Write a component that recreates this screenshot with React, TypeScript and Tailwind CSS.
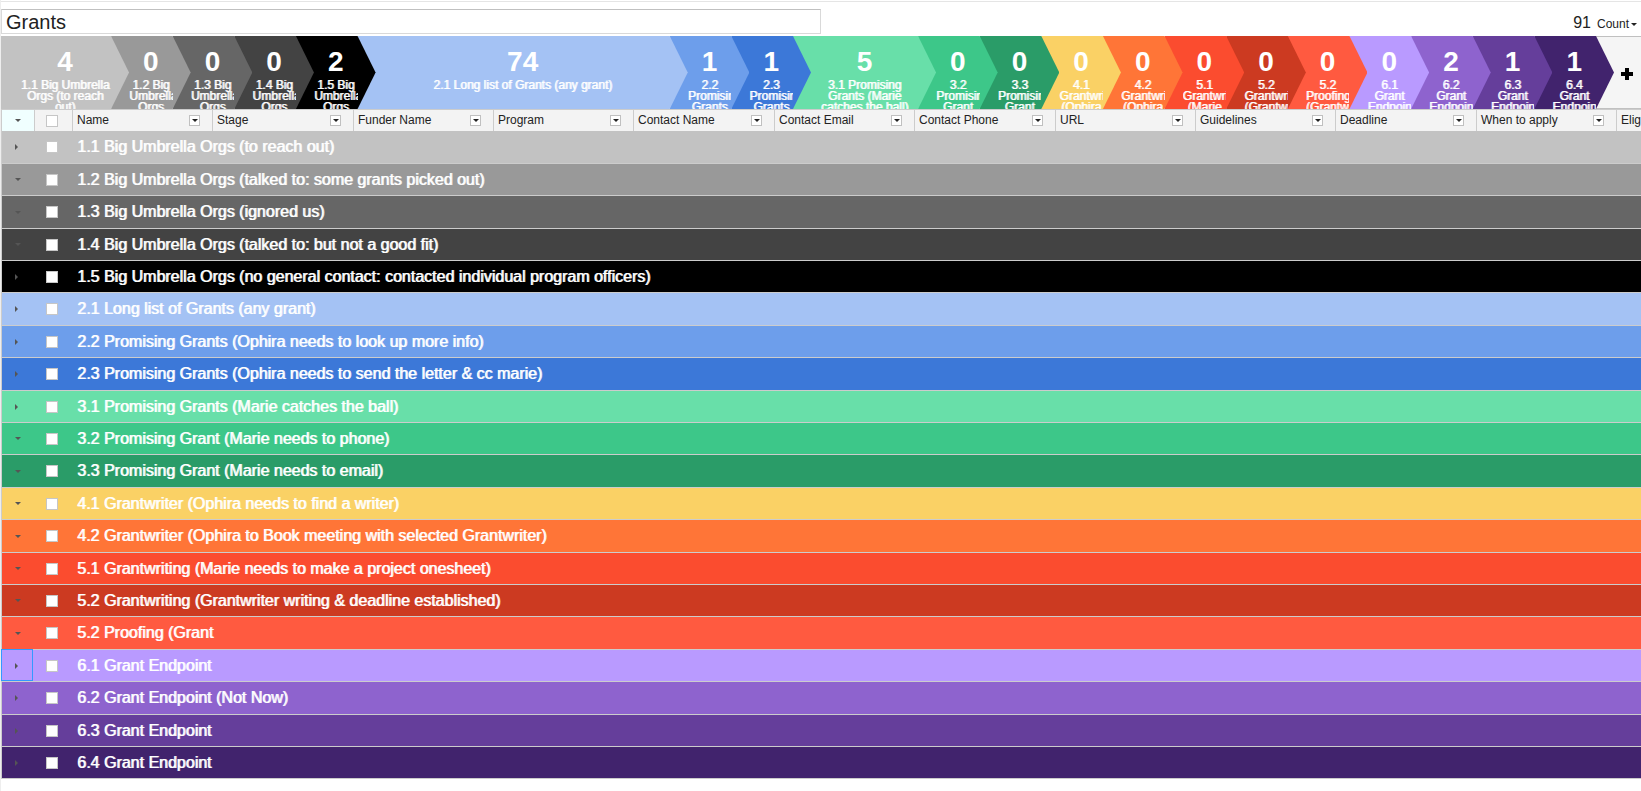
import React from "react";
import { clsx } from "clsx";

type Stage = {
  count: number;
  short: string;
  name: string;
  bg: string;
  open: boolean;
  selected?: boolean;
};

const stages: Stage[] = [
  { count: 4, short: "1.1 Big Umbrella Orgs (to reach out)", name: "1.1 Big Umbrella Orgs (to reach out)", bg: "bg-[#c2c2c2]", open: false },
  { count: 0, short: "1.2 Big Umbrella Orgs", name: "1.2 Big Umbrella Orgs (talked to: some grants picked out)", bg: "bg-[#999999]", open: true },
  { count: 0, short: "1.3 Big Umbrella Orgs", name: "1.3 Big Umbrella Orgs (ignored us)", bg: "bg-[#666666]", open: true },
  { count: 0, short: "1.4 Big Umbrella Orgs", name: "1.4 Big Umbrella Orgs (talked to: but not a good fit)", bg: "bg-[#434343]", open: true },
  { count: 2, short: "1.5 Big Umbrella Orgs", name: "1.5 Big Umbrella Orgs (no general contact: contacted individual program officers)", bg: "bg-black", open: false },
  { count: 74, short: "2.1 Long list of Grants (any grant)", name: "2.1 Long list of Grants (any grant)", bg: "bg-[#a4c2f4]", open: false },
  { count: 1, short: "2.2 Promising Grants", name: "2.2 Promising Grants (Ophira needs to look up more info)", bg: "bg-[#6d9eeb]", open: false },
  { count: 1, short: "2.3 Promising Grants", name: "2.3 Promising Grants (Ophira needs to send the letter & cc marie)", bg: "bg-[#3c78d8]", open: false },
  { count: 5, short: "3.1 Promising Grants (Marie catches the ball)", name: "3.1 Promising Grants (Marie catches the ball)", bg: "bg-[#68dfa9]", open: false },
  { count: 0, short: "3.2 Promising Grant", name: "3.2 Promising Grant (Marie needs to phone)", bg: "bg-[#3dc789]", open: true },
  { count: 0, short: "3.3 Promising Grant", name: "3.3 Promising Grant (Marie needs to email)", bg: "bg-[#2a9c68]", open: true },
  { count: 0, short: "4.1 Grantwriter (Ophira", name: "4.1 Grantwriter (Ophira needs to find a writer)", bg: "bg-[#fad165]", open: true },
  { count: 0, short: "4.2 Grantwriter (Ophira", name: "4.2 Grantwriter (Ophira to Book meeting with selected Grantwriter)", bg: "bg-[#ff7537]", open: true },
  { count: 0, short: "5.1 Grantwriting (Marie", name: "5.1 Grantwriting (Marie needs to make a project onesheet)", bg: "bg-[#fb4c2f]", open: true },
  { count: 0, short: "5.2 Grantwriting (Grantwriter", name: "5.2 Grantwriting (Grantwriter writing & deadline established)", bg: "bg-[#cc3a21]", open: true },
  { count: 0, short: "5.2 Proofing (Grantwriter", name: "5.2 Proofing (Grant", bg: "bg-[#ff5a40]", open: true },
  { count: 0, short: "6.1 Grant Endpoint", name: "6.1 Grant Endpoint", bg: "bg-[#b99aff]", open: false, selected: true },
  { count: 2, short: "6.2 Grant Endpoint", name: "6.2 Grant Endpoint (Not Now)", bg: "bg-[#8e63ce]", open: false },
  { count: 1, short: "6.3 Grant Endpoint", name: "6.3 Grant Endpoint", bg: "bg-[#653e9b]", open: false },
  { count: 1, short: "6.4 Grant Endpoint", name: "6.4 Grant Endpoint", bg: "bg-[#41236d]", open: false },
];

const columns = [
  { label: "Name", width: "w-[140px]" },
  { label: "Stage", width: "w-[141px]" },
  { label: "Funder Name", width: "w-[140px]" },
  { label: "Program", width: "w-[140px]" },
  { label: "Contact Name", width: "w-[141px]" },
  { label: "Contact Email", width: "w-[140px]" },
  { label: "Contact Phone", width: "w-[141px]" },
  { label: "URL", width: "w-[140px]" },
  { label: "Guidelines", width: "w-[140px]" },
  { label: "Deadline", width: "w-[141px]" },
  { label: "When to apply", width: "w-[140px]" },
  { label: "Eligibility", width: "w-[140px]" },
];

function Caret({ open }: { open: boolean }) {
  return open ? (
    <svg viewBox="0 0 6 3" className="ml-[13px] block h-[3px] w-[6px]" aria-hidden="true">
      <path d="M0 0h6L3 3z" fill="#555" />
    </svg>
  ) : (
    <svg viewBox="0 0 3 6" className="ml-[13px] block h-[6px] w-[3px]" aria-hidden="true">
      <path d="M0 0v6L3 3z" fill="#555" />
    </svg>
  );
}

function Tick({ label }: { label: string }) {
  return (
    <input
      type="checkbox"
      aria-label={label}
      className="ml-[11px] block size-3 appearance-none border border-[#c6c6c6] bg-white"
    />
  );
}

function Chevron({ stage, order }: { stage: Stage; order: number }) {
  return (
    <li
      style={{ zIndex: order }}
      className={clsx(
        "relative -mr-[18px] h-[73px] min-w-0 px-[18px] pt-[9px] text-center text-white [clip-path:polygon(0_0,calc(100%-18px)_0,100%_50%,calc(100%-18px)_100%,0_100%)]",
        stage.bg,
      )}
    >
      <div className="h-full overflow-hidden">
        <div className="h-[35px] text-[28px] leading-[34px] font-bold">{stage.count}</div>
        <div className="text-[12px] leading-[11px] [text-shadow:1px_0_0_rgba(255,255,255,0.85)]">{stage.short}</div>
      </div>
    </li>
  );
}

export default function App() {
  return (
    <div className="overflow-hidden border-l border-[#eeeeee] bg-white pb-3 font-['Liberation_Sans',Arial,sans-serif] text-[#222]">
      <header className="mt-px flex items-start justify-between border-t border-[#e5e5e5] pt-[7px]">
        <input
          type="text"
          aria-label="Pipeline name"
          defaultValue="Grants"
          className="h-[25px] w-1/2 border border-[#d9d9d9] border-t-[#c0c0c0] px-1 pt-0.5 text-[20px] leading-[22px]"
        />
        <button type="button" className="mr-1 flex h-[27px] items-baseline gap-1.5">
          <span className="text-[16px] leading-[27px]">91</span>
          <span className="flex items-center text-[12px]">
            Count
            <svg viewBox="0 0 6 3" className="ml-0.5 h-[3px] w-[6px]" aria-hidden="true">
              <path d="M0 0h6L3 3z" fill="#222" />
            </svg>
          </span>
        </button>
      </header>

      <div className="flex bg-[#f5f5f5]">
        <ol className="isolate grid min-w-0 flex-1 grid-cols-[1100fr_repeat(4,616fr)_3120fr_repeat(2,616fr)_1250fr_repeat(11,616fr)]">
          {stages.map((stage, i) => (
            <Chevron key={stage.name} stage={stage} order={stages.length - i} />
          ))}
        </ol>
        <button
          type="button"
          aria-label="Add stage"
          className="flex w-[45px] items-center justify-center border-y border-[#c0c0c0] pt-0.5 pl-4"
        >
          <svg viewBox="0 0 12 12" className="size-3" aria-hidden="true">
            <path d="M4 0h4v4h4v4H8v4H4V8H0V4h4z" fill="#000" />
          </svg>
        </button>
      </div>

      <table className="w-[1756px] table-fixed border-separate border-spacing-0 border-l border-[#cccccc]">
        <colgroup>
          <col className="w-[33px]" />
          <col className="w-[38px]" />
          {columns.map((c) => (
            <col key={c.label} className={c.width} />
          ))}
        </colgroup>
        <thead>
          <tr className="h-[22px] bg-[#f3f3f3]">
            <th className="border-t border-r border-[#cccccc] bg-[#f0ffff] p-0">
              <button type="button" aria-label="Collapse all" className="block w-full">
                <Caret open />
              </button>
            </th>
            <th className="border-t border-r border-[#cccccc] p-0">
              <Tick label="Select all" />
            </th>
            {columns.map((c) => (
              <th key={c.label} className="border-t border-r border-[#cccccc] p-0 text-left text-[12px] leading-[18px] font-normal">
                <div className="flex items-center justify-between pr-3 pb-px pl-1">
                  {c.label}
                  <button
                    type="button"
                    aria-label={`${c.label} options`}
                    className="flex size-[11px] items-center justify-center border border-[#c0c0c0] bg-white"
                  >
                    <svg viewBox="0 0 6 3" className="h-[3px] w-[6px]" aria-hidden="true">
                      <path d="M0 0h6L3 3z" fill="#222" />
                    </svg>
                  </button>
                </div>
              </th>
            ))}
          </tr>
        </thead>
        <tbody>
          {stages.map((s) => (
            <tr
              key={s.name}
              className={clsx("h-8 text-white [&:nth-child(5n+1)]:h-[33px] [&:nth-child(5n+3)]:h-[33px]", s.bg)}
            >
              <td className="relative border-b border-[#cccccc] p-0">
                <button type="button" aria-label={`Toggle ${s.name}`} className="block w-full">
                  <Caret open={s.open} />
                </button>
                {s.selected && (
                  <span className="pointer-events-none absolute -top-px right-0.5 bottom-0 -left-px border border-[#3399ff]" />
                )}
              </td>
              <td className="border-b border-[#cccccc] p-0">
                <Tick label={`Select ${s.name}`} />
              </td>
              <td
                colSpan={columns.length}
                className="border-b border-[#cccccc] py-0 pr-0 pl-1 text-[16px] leading-[20px] [text-shadow:1px_0_0_rgba(255,255,255,0.85)]"
              >
                {s.name}
              </td>
            </tr>
          ))}
        </tbody>
      </table>
    </div>
  );
}
